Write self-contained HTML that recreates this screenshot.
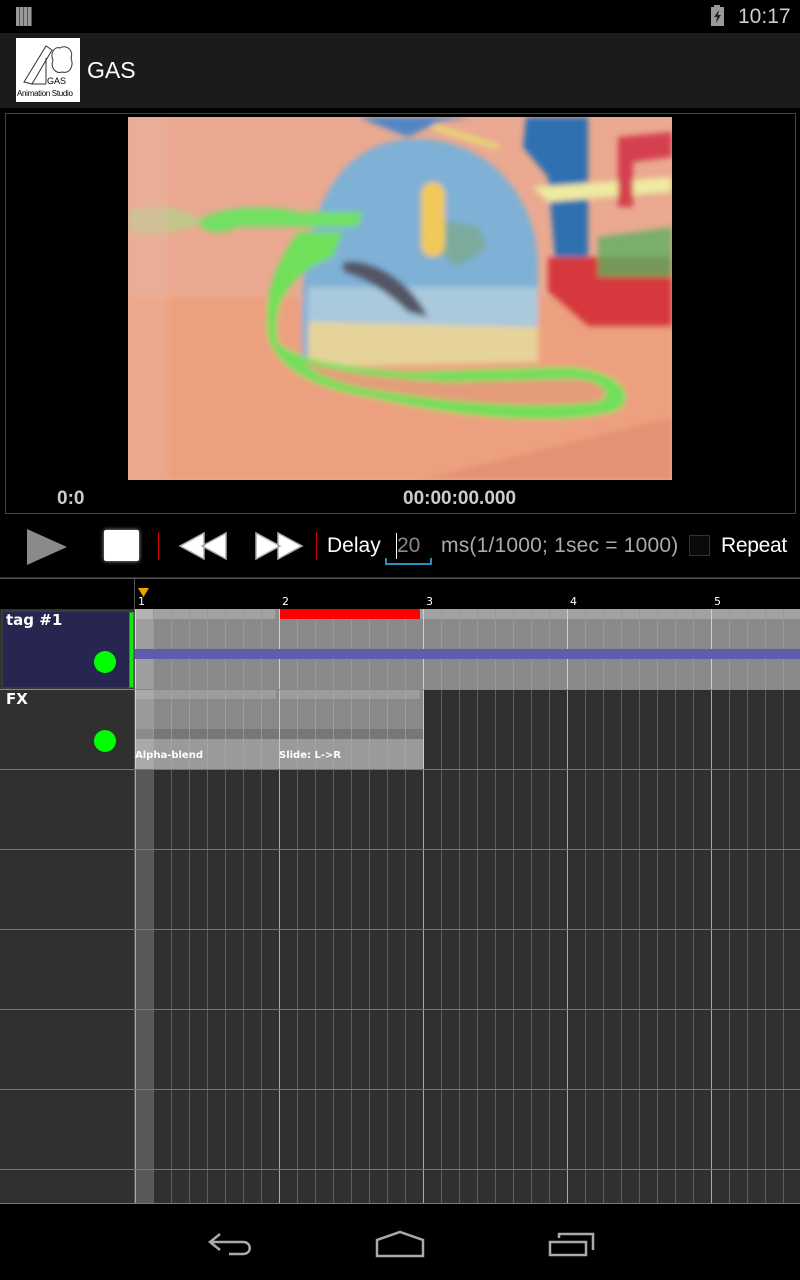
<!DOCTYPE html>
<html><head><style>
*{margin:0;padding:0;box-sizing:border-box}
body{width:800px;height:1280px;background:#000;position:relative;overflow:hidden;font-family:"Liberation Sans",sans-serif}
.a{position:absolute}
.mono{font-family:"DejaVu Sans",sans-serif;font-weight:bold;color:#fff}
</style></head><body>
<div class="a" style="left:0;top:0;width:800px;height:33px;background:#000"></div>
<div class="a" style="left:16px;top:7px;width:16px;height:19px;background:repeating-linear-gradient(90deg,#999 0 3px,#555 3px 4px)"></div>
<svg class="a" style="left:710px;top:5px" width="16" height="22"><rect x="4" y="0" width="6" height="3" fill="#999"/><rect x="1" y="2" width="13" height="19" fill="#999"/><path d="M9 5 L4 12 L7 12 L6 18 L11 10 L8 10 Z" fill="#222"/></svg>
<div class="a" style="left:738px;top:5px;color:#ccc;font-size:21px">10:17</div>
<div class="a" style="left:0;top:33px;width:800px;height:75px;background:#1b1b1b"></div>
<div class="a" style="left:16px;top:38px;width:64px;height:64px;background:#fff;overflow:hidden">
<svg width="64" height="64"><path d="M8 44 L30 8 L36 12 L16 46 Z M30 20 L30 46 M16 46 L30 46" stroke="#333" fill="none" stroke-width="1"/><path d="M44 10 C38 8 34 16 37 22 C34 30 40 36 46 34 C54 36 58 28 55 20 C58 12 50 6 44 10Z" stroke="#333" fill="none"/></svg>
<div class="a" style="left:31px;top:38px;font-size:9px;color:#000">GAS</div>
<div class="a" style="left:1px;top:51px;font-size:8px;color:#000;white-space:nowrap;letter-spacing:-0.3px">Animation Studio</div>
</div>
<div class="a" style="left:87px;top:57px;color:#fff;font-size:23px">GAS</div>
<div class="a" style="left:5px;top:113px;width:791px;height:401px;border:1px solid #e00000"></div>
<svg class="a" style="left:128px;top:117px" width="544" height="363" viewBox="0 0 544 363">
<defs><filter id="b"><feGaussianBlur stdDeviation="3"/></filter></defs>
<rect width="544" height="363" fill="#eaa990"/>
<g filter="url(#b)">
<rect y="180" width="544" height="183" fill="#eda07f"/>
<path d="M170 363 L290 363 L544 300 L544 363Z" fill="#e39374"/>
<path d="M200 0 L230 0 L280 20 L310 5 L345 0 Z" fill="#4f86c6"/>
<path d="M175 240 C165 80 220 20 290 22 C360 22 410 80 410 150 L410 230 L360 245 L175 240Z" fill="#7fb0d6"/>
<path d="M180 170 L410 170 L410 230 L180 240Z" fill="#a9c9dc"/>
<path d="M180 205 L410 210 L410 245 L180 250Z" fill="#e6d39a"/>
<path d="M300 100 L350 110 L360 130 L330 150 L290 120Z" fill="#78a878" opacity=".6"/>
<path d="M215 145 C240 140 280 160 300 200 L280 195 C260 175 235 160 215 155Z" fill="#556"/>
<path d="M305 10 L370 30" stroke="#e8e070" stroke-width="5"/>
<rect x="293" y="65" width="24" height="75" rx="12" fill="#f1c85a"/>
<path d="M398 0 L460 0 L460 170 L430 175 L420 60 L395 30 Z" fill="#2f6fb0"/>
<path d="M405 70 L544 60 L544 75 L420 85Z" fill="#eeeaa0"/>
<path d="M420 140 L544 140 L544 210 L460 210 L420 175Z" fill="#d6393d"/>
<path d="M470 120 L544 110 L544 160 L470 160Z" fill="#5db060" opacity=".8"/>
<path d="M490 20 L544 15 L544 40 L505 45 L505 90 L490 90Z" fill="#d54050"/>
<path d="M70 105 C90 85 160 90 170 95 L235 95 L230 110 L110 110 C90 120 75 115 70 105Z" fill="#72e064"/>
<path d="M0 95 C20 85 60 90 75 105 C60 115 20 120 0 115Z" fill="#a6d88a" opacity=".6"/>
<path d="M170 115 L215 115 L205 140 C150 160 145 200 150 225 C170 245 220 250 280 255 L440 250 C500 255 510 285 485 295 C420 310 330 300 240 280 C180 270 150 250 140 220 C135 180 145 150 170 115Z" fill="#6fe05a"/>
<path d="M175 245 C210 255 260 262 320 265 L440 262 C480 262 485 280 470 285 C410 292 330 287 260 275 C220 270 190 260 175 245Z" fill="#e59c7a"/>
<rect x="0" y="0" width="40" height="363" fill="#e8b8a4" opacity=".35"/>
</g>
</svg>
<div class="a" style="left:57px;top:488px;color:#ccc;font-size:19px;font-weight:bold">0:0</div>
<div class="a" style="left:403px;top:488px;color:#ccc;font-size:19px;font-weight:bold">00:00:00.000</div>
<svg class="a" style="left:25px;top:528px" width="44" height="38"><path d="M2 1 L42 19 L2 37Z" fill="#8a8a8a"/></svg>
<div class="a" style="left:104px;top:530px;width:35px;height:31px;background:#fff;border-radius:2px;box-shadow:0 0 4px #aaa"></div>
<div class="a" style="left:158px;top:532px;width:1px;height:28px;background:#c00"></div>
<svg class="a" style="left:176px;top:531px" width="54" height="30"><path d="M28 2 L28 28 L4 15Z M50 2 L50 28 L26 15Z" fill="#fff" stroke="#aaa" stroke-width="1.5"/></svg>
<svg class="a" style="left:252px;top:531px" width="54" height="30"><path d="M4 2 L4 28 L28 15Z M26 2 L26 28 L50 15Z" fill="#fff" stroke="#aaa" stroke-width="1.5"/></svg>
<div class="a" style="left:316px;top:532px;width:1px;height:28px;background:#c00"></div>
<div class="a" style="left:327px;top:534px;color:#fff;font-size:21px">Delay</div>
<div class="a" style="left:396px;top:533px;width:1px;height:26px;background:#fff"></div>
<div class="a" style="left:397px;top:534px;color:#888;font-size:21px">20</div>
<div class="a" style="left:385px;top:558px;width:47px;height:7px;border:2px solid #2a8fc0;border-top:none"></div>
<div class="a" style="left:441px;top:534px;color:#aaa;font-size:21px;letter-spacing:0.2px">ms(1/1000; 1sec = 1000)</div>
<div class="a" style="left:689px;top:535px;width:21px;height:21px;border:1px solid #333;background:#0a0a0a"></div>
<div class="a" style="left:721px;top:534px;color:#fff;font-size:21px;letter-spacing:-0.3px">Repeat</div>
<div class="a" style="left:0;top:577px;width:800px;height:627px;background:#303030"></div>
<div class="a" style="left:0;top:578px;width:800px;height:31px;background:#000;border-top:1px solid #555"></div>
<div class="a" style="left:134px;top:578px;width:1px;height:626px;background:#555"></div>
<div class="a" style="left:135px;top:769px;width:18px;height:435px;background:#595959"></div>
<div class="a" style="left:135px;top:609px;width:665px;height:595px;background:repeating-linear-gradient(90deg,#aaa 0 1px,transparent 1px 144px),repeating-linear-gradient(90deg,#5e5e5e 0 1px,transparent 1px 18px)"></div>
<svg class="a" style="left:138px;top:588px" width="12" height="10"><path d="M0 0 L11 0 L5.5 9Z" fill="#f5a000"/></svg>
<div class="a mono" style="left:138px;top:595px;font-size:11px;font-weight:normal">1</div>
<div class="a mono" style="left:282px;top:595px;font-size:11px;font-weight:normal">2</div>
<div class="a mono" style="left:426px;top:595px;font-size:11px;font-weight:normal">3</div>
<div class="a mono" style="left:570px;top:595px;font-size:11px;font-weight:normal">4</div>
<div class="a mono" style="left:714px;top:595px;font-size:11px;font-weight:normal">5</div>
<div class="a" style="left:135px;top:609px;width:665px;height:80px;background:#898989"></div>
<div class="a" style="left:135px;top:609px;width:665px;height:10px;background:#a2a2a2"></div>
<div class="a" style="left:135px;top:609px;width:665px;height:80px;background:repeating-linear-gradient(90deg,#d0d0d0 0 1px,transparent 1px 144px),repeating-linear-gradient(90deg,#999 0 1px,transparent 1px 18px)"></div>
<div class="a" style="left:135px;top:609px;width:18px;height:80px;background:rgba(255,255,255,.18)"></div>
<div class="a" style="left:275px;top:609px;width:4px;height:10px;background:#8e8e8e"></div>
<div class="a" style="left:280px;top:609px;width:140px;height:10px;background:#f00"></div>
<div class="a" style="left:135px;top:649px;width:665px;height:10px;background:#5d5dab"></div>
<div class="a" style="left:135px;top:689px;width:288px;height:80px;background:#898989;border-top:1px solid #aaa"></div>
<div class="a" style="left:135px;top:690px;width:141px;height:9px;background:#9c9c9c"></div>
<div class="a" style="left:280px;top:690px;width:140px;height:9px;background:#9c9c9c"></div>
<div class="a" style="left:135px;top:739px;width:288px;height:30px;background:#9a9a9a"></div>
<div class="a" style="left:135px;top:729px;width:288px;height:10px;background:#777"></div>
<div class="a" style="left:135px;top:689px;width:288px;height:80px;background:repeating-linear-gradient(90deg,#c8c8c8 0 1px,transparent 1px 144px),repeating-linear-gradient(90deg,rgba(170,170,170,.6) 0 1px,transparent 1px 18px)"></div>
<div class="a" style="left:135px;top:689px;width:18px;height:80px;background:rgba(255,255,255,.15)"></div>
<div class="a" style="left:423px;top:689px;width:1px;height:80px;background:#ccc"></div>
<div class="a mono" style="left:135px;top:750px;font-size:10px">Alpha-blend</div>
<div class="a mono" style="left:279px;top:750px;font-size:10px">Slide: L-&gt;R</div>
<div class="a" style="left:0;top:689px;width:800px;height:1px;background:#888"></div>
<div class="a" style="left:0;top:769px;width:800px;height:1px;background:#777"></div>
<div class="a" style="left:0;top:849px;width:800px;height:1px;background:#777"></div>
<div class="a" style="left:0;top:929px;width:800px;height:1px;background:#777"></div>
<div class="a" style="left:0;top:1009px;width:800px;height:1px;background:#777"></div>
<div class="a" style="left:0;top:1089px;width:800px;height:1px;background:#777"></div>
<div class="a" style="left:0;top:1169px;width:800px;height:1px;background:#777"></div>
<div class="a" style="left:0;top:1203px;width:800px;height:1px;background:#777"></div>
<div class="a" style="left:1px;top:610px;width:133px;height:79px;background:#262650;border:2px solid #3a3a3a"></div>
<div class="a" style="left:129px;top:612px;width:5px;height:76px;background:#1be31b;border:1px solid #0a0"></div>
<div class="a mono" style="left:6px;top:611px;font-size:15px">tag #1</div>
<div class="a" style="left:94px;top:651px;width:22px;height:22px;border-radius:50%;background:#0f0"></div>
<div class="a mono" style="left:6px;top:690px;font-size:15px">FX</div>
<div class="a" style="left:94px;top:730px;width:22px;height:22px;border-radius:50%;background:#0f0"></div>
<svg class="a" style="left:200px;top:1225px" width="420" height="36">
<path d="M20 9 L10 17 L20 25 M10 17 L43 17 C52 17 52 29 43 29 L29 29" stroke="#aaa" stroke-width="2.5" fill="none"/>
<path d="M177 31 L177 15 L200 7 L223 15 L223 31 Z" stroke="#aaa" stroke-width="2.5" fill="none"/>
<rect x="350" y="17" width="36" height="13" stroke="#aaa" stroke-width="2.5" fill="none"/>
<path d="M359 13 L359 9 L393 9 L393 25" stroke="#aaa" stroke-width="2.5" fill="none"/>
</svg>
</body></html>
